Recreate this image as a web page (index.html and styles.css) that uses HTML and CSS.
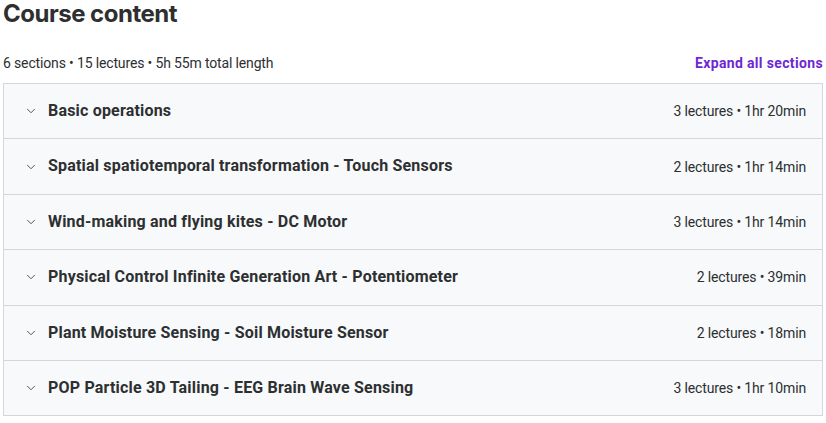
FILE: index.html
```html
<!DOCTYPE html>
<html>
<head>
<meta charset="utf-8">
<link rel="stylesheet" href="styles.css">
</head>
<body>
<div class="page">
  <h2 class="heading">Course content</h2>
  <div class="bar">
    <span class="stats">6 sections • 15 lectures • 5h 55m total length</span>
    <span class="expand">Expand all sections</span>
  </div>
  <div class="panel">
    <div class="row">
      <svg class="chev" viewBox="0 0 24 24" width="14" height="14"><path d="M6 9l6 6 6-6" fill="none" stroke="#3e4143" stroke-width="1.5" stroke-linecap="round" stroke-linejoin="round"/></svg>
      <span class="title">Basic operations</span>
      <span class="meta">3 lectures • 1hr 20min</span>
    </div>
    <div class="row">
      <svg class="chev" viewBox="0 0 24 24" width="14" height="14"><path d="M6 9l6 6 6-6" fill="none" stroke="#3e4143" stroke-width="1.5" stroke-linecap="round" stroke-linejoin="round"/></svg>
      <span class="title">Spatial spatiotemporal transformation - Touch Sensors</span>
      <span class="meta">2 lectures • 1hr 14min</span>
    </div>
    <div class="row">
      <svg class="chev" viewBox="0 0 24 24" width="14" height="14"><path d="M6 9l6 6 6-6" fill="none" stroke="#3e4143" stroke-width="1.5" stroke-linecap="round" stroke-linejoin="round"/></svg>
      <span class="title">Wind-making and flying kites - DC Motor</span>
      <span class="meta">3 lectures • 1hr 14min</span>
    </div>
    <div class="row">
      <svg class="chev" viewBox="0 0 24 24" width="14" height="14"><path d="M6 9l6 6 6-6" fill="none" stroke="#3e4143" stroke-width="1.5" stroke-linecap="round" stroke-linejoin="round"/></svg>
      <span class="title">Physical Control Infinite Generation Art - Potentiometer</span>
      <span class="meta">2 lectures • 39min</span>
    </div>
    <div class="row">
      <svg class="chev" viewBox="0 0 24 24" width="14" height="14"><path d="M6 9l6 6 6-6" fill="none" stroke="#3e4143" stroke-width="1.5" stroke-linecap="round" stroke-linejoin="round"/></svg>
      <span class="title">Plant Moisture Sensing - Soil Moisture Sensor</span>
      <span class="meta">2 lectures • 18min</span>
    </div>
    <div class="row">
      <svg class="chev" viewBox="0 0 24 24" width="14" height="14"><path d="M6 9l6 6 6-6" fill="none" stroke="#3e4143" stroke-width="1.5" stroke-linecap="round" stroke-linejoin="round"/></svg>
      <span class="title">POP Particle 3D Tailing - EEG Brain Wave Sensing</span>
      <span class="meta">3 lectures • 1hr 10min</span>
    </div>
  </div>
</div>
</body>
</html>
```
FILE: styles.css
```css
* { box-sizing: border-box; }
body {
  margin: 0;
  background: #fff;
  color: #2d2f31;
  font-family: Roboto, "Noto Sans", sans-serif;
}
.page {
  padding: 0 3px;
}
.heading {
  margin: 0;
  font-family: Inter, Roboto, sans-serif;
  font-size: 24px;
  line-height: 28px;
  font-weight: 700;
  letter-spacing: -0.5px;
}
.bar {
  display: flex;
  justify-content: space-between;
  align-items: center;
  margin-top: 20px;
  height: 30px;
  margin-bottom: 5px;
}
.stats {
  font-size: 14px;
  letter-spacing: -0.15px;
  color: #2d2f31;
}
.expand {
  font-size: 14px;
  font-weight: 700;
  letter-spacing: 0.35px;
  color: #6d28d2;
}
.panel {
  border: 1px solid #d1d7dc;
  border-bottom: none;
  background: #f7f9fa;
}
.row {
  display: flex;
  align-items: center;
  padding: 16px 16px 16px 20px;
  border-bottom: 1px solid #d1d7dc;
}
.chev {
  flex: none;
  margin-right: 10px;
}
.title {
  flex: 1;
  font-size: 16px;
  line-height: 22.4px;
  font-weight: 700;
  letter-spacing: 0.19px;
}
.meta {
  font-size: 14px;
  letter-spacing: -0.14px;
  color: #2d2f31;
}
```
